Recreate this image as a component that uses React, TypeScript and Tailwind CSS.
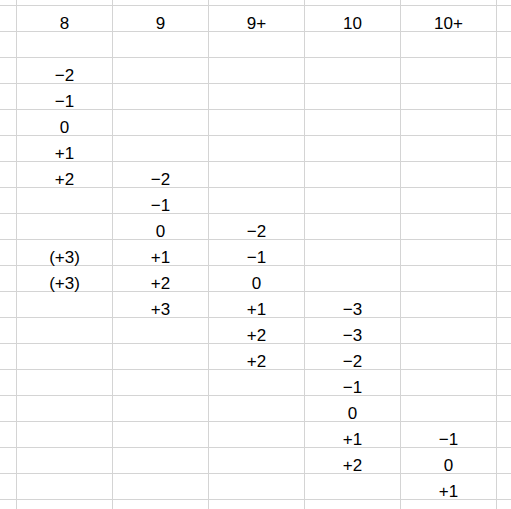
import React from "react";

const rows: string[][] = [
  ["8", "9", "9+", "10", "10+"],
  ["", "", "", "", ""],
  ["−2", "", "", "", ""],
  ["−1", "", "", "", ""],
  ["0", "", "", "", ""],
  ["+1", "", "", "", ""],
  ["+2", "−2", "", "", ""],
  ["", "−1", "", "", ""],
  ["", "0", "−2", "", ""],
  ["(+3)", "+1", "−1", "", ""],
  ["(+3)", "+2", "0", "", ""],
  ["", "+3", "+1", "−3", ""],
  ["", "", "+2", "−3", ""],
  ["", "", "+2", "−2", ""],
  ["", "", "", "−1", ""],
  ["", "", "", "0", ""],
  ["", "", "", "+1", "−1"],
  ["", "", "", "+2", "0"],
  ["", "", "", "", "+1"],
];

export default function App() {
  const cells: React.ReactNode[] = [];
  for (let c = 0; c < 7; c++) cells.push(<div key={`t${c}`} className="bg-white" />);
  rows.forEach((r, i) => {
    cells.push(<div key={`l${i}`} className="bg-white" />);
    r.forEach((v, j) => {
      cells.push(
        <div
          key={`c${i}-${j}`}
          className="bg-white flex items-end justify-center text-[17px] leading-[15px] text-black"
        >
          {v}
        </div>
      );
    });
    cells.push(<div key={`r${i}`} className="bg-white" />);
  });
  for (let c = 0; c < 7; c++) cells.push(<div key={`b${c}`} className="bg-white" />);

  return (
    <div
      className="w-[511px] h-[509px] overflow-hidden bg-white"
      style={{ fontFamily: '"Liberation Sans", Arial, sans-serif' }}
    >
      <div className="grid grid-cols-[16px_repeat(5,95px)_14px] grid-rows-[5px_repeat(19,25px)_9px] gap-px bg-[#d4d4d4] w-[511px] h-[509px]">
        {cells}
      </div>
    </div>
  );
}
